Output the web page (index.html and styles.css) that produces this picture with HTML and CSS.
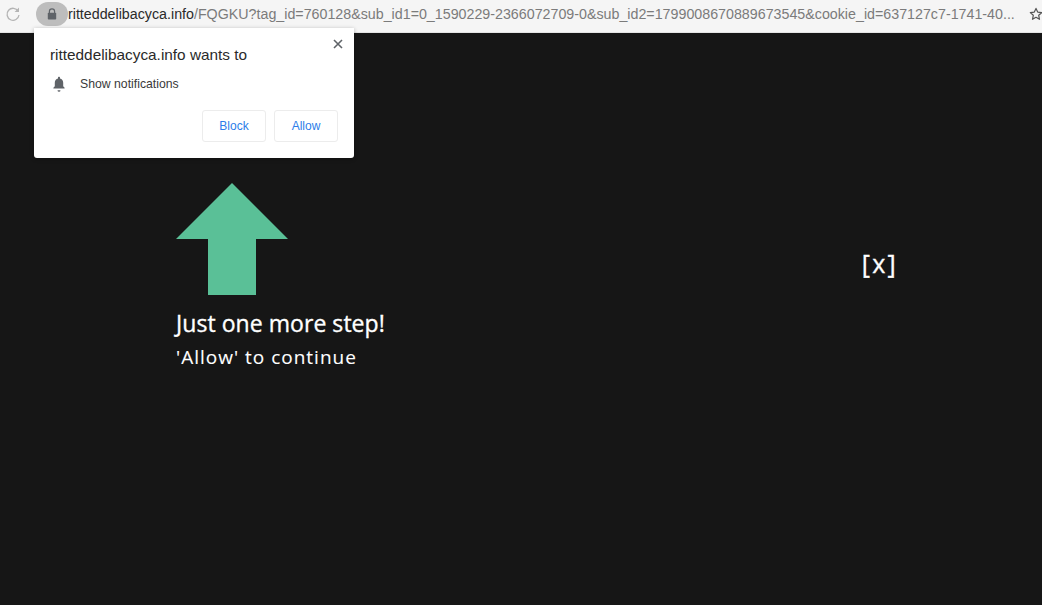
FILE: index.html
```html
<!DOCTYPE html>
<html lang="en">
<head>
<meta charset="utf-8">
<title>Just one more step</title>
<link rel="stylesheet" href="styles.css">
</head>
<body>
<header class="toolbar">
  <svg class="reload" width="16" height="16" viewBox="0 0 16 16" aria-hidden="true">
    <path d="M13.200 5.200A6 6 0 1 0 14 9" fill="none" stroke="#b4b4b4" stroke-width="1.300"/>
    <path d="M14 1.600V6H9.600z" fill="#b4b4b4"/>
  </svg>
  <div class="lock-chip">
    <svg width="10" height="12" viewBox="0 0 10 12" aria-hidden="true">
      <path d="M2.400 5V3.400a2.600 2.600 0 0 1 5.200 0V5" fill="none" stroke="#5f6368" stroke-width="1.200"/>
      <rect x="0.800" y="4.800" width="8.400" height="6.800" rx="0.800" fill="#5f6368"/>
    </svg>
  </div>
  <div class="url"><span class="host">ritteddelibacyca.info</span>/FQGKU?tag_id=760128&amp;sub_id1=0_1590229-2366072709-0&amp;sub_id2=1799008670889673545&amp;cookie_id=637127c7-1741-40...</div>
  <svg class="star" width="14" height="14" viewBox="0 0 14 14" aria-hidden="true">
    <path d="M7 1.400l1.700 3.700 4 .5-3 2.700.8 4L7 10.300l-3.500 2 .8-4-3-2.700 4-.5z" fill="none" stroke="#555" stroke-width="1.200" stroke-linejoin="round"/>
  </svg>
</header>

<aside class="prompt">
  <svg class="close" width="10" height="10" viewBox="0 0 10 10" aria-hidden="true">
    <path d="M1 1l8 8M9 1l-8 8" stroke="#5f6368" stroke-width="1.600"/>
  </svg>
  <h2 class="prompt-title">ritteddelibacyca.info wants to</h2>
  <div class="prompt-row">
    <svg width="14" height="16" viewBox="0 0 14 16" aria-hidden="true">
      <path d="M7 .8c.6 0 1 .4 1 1v.6c2 .5 3.200 2.200 3.200 4.300v3.500l1.400 1.500v.7H1.400v-.7l1.400-1.500V6.700c0-2.100 1.200-3.800 3.200-4.300v-.6c0-.6.4-1 1-1z" fill="#5f6368"/>
      <path d="M5.500 14.200h3a1.500 1.500 0 0 1-3 0z" fill="#5f6368"/>
    </svg>
    <span>Show notifications</span>
  </div>
  <div class="prompt-actions">
    <button class="btn" type="button">Block</button>
    <button class="btn" type="button">Allow</button>
  </div>
</aside>

<main class="stage">
  <div class="message">
    <svg class="arrow" width="112" height="112" viewBox="0 0 112 112" aria-hidden="true">
      <path d="M56 0l56 56H80v56H32V56H0z" fill="#5ac097"/>
    </svg>
    <h1 class="headline">Just one more step!</h1>
    <p class="sub">'Allow' to continue</p>
  </div>
  <div class="dismiss">[x]</div>
</main>
</body>
</html>
```
FILE: styles.css
```css
* { box-sizing: border-box; }
html, body { margin: 0; height: 100%; }
body {
  display: flex;
  flex-direction: column;
  height: 605px;
  overflow: hidden;
  background: #161616;
  font-family: "Liberation Sans", Arial, sans-serif;
}
.toolbar {
  flex: none;
  height: 33px;
  display: flex;
  align-items: center;
  padding: 0 5px 4px 5px;
  background: #f5f5f5;
  border-bottom: 1px solid #e4e4e4;
}
.reload { flex: none; }
.lock-chip {
  flex: none;
  width: 32px;
  height: 24px;
  margin-left: 15px;
  border-radius: 12px;
  background: #bdbdbd;
  display: flex;
  align-items: center;
  justify-content: center;
}
.url {
  flex: none;
  width: 962px;
  font-size: 14.25px;
  color: #7b7b7b;
  white-space: nowrap;
}
.host { color: #2a2a2a; }
.star { flex: none; margin-left: -1px; }

.prompt {
  position: absolute;
  left: 34px;
  top: 28px;
  width: 320px;
  height: 130px;
  padding: 18px 16px 16px;
  background: #fff;
  border-radius: 0 0 3px 3px;
  box-shadow: 0 1px 4px rgba(0, 0, 0, .3);
}
.close { position: absolute; top: 11px; right: 11px; }
.prompt-title {
  margin: 0;
  font-size: 15.35px;
  font-weight: 400;
  line-height: 18px;
  color: #2a2a2a;
}
.prompt-row {
  display: flex;
  align-items: center;
  gap: 14px;
  margin-top: 12px;
  padding-left: 2px;
  font-size: 12.25px;
  line-height: 16px;
  color: #3a3a3a;
}
.prompt-actions {
  display: flex;
  justify-content: flex-end;
  gap: 8px;
  margin-top: 18px;
}
.btn {
  width: 64px;
  height: 32px;
  padding: 0;
  background: #fff;
  border: 1px solid #ececec;
  border-radius: 3px;
  font: 12px "Liberation Sans", Arial, sans-serif;
  color: #2b7de9;
}

.stage {
  flex: 1;
  display: flex;
  justify-content: space-between;
  align-items: flex-start;
  padding: 150px 144px 0 176px;
  color: #fff;
  font-family: "Open Sans", sans-serif;
}
.arrow { display: block; }
.headline {
  margin: 10px 0 0;
  font-size: 23px;
  font-weight: 400;
  line-height: 36px;
  letter-spacing: .05px;
  -webkit-text-stroke: .35px #fff;
}
.sub {
  margin: 1px 0 0;
  font-size: 19px;
  line-height: 30px;
  letter-spacing: 1px;
  -webkit-text-stroke: .1px #fff;
}
.dismiss {
  margin-top: 62px;
  font-size: 25px;
  font-weight: 400;
  line-height: 36px;
  letter-spacing: 2.3px;
  -webkit-text-stroke: .35px #fff;
}
```
